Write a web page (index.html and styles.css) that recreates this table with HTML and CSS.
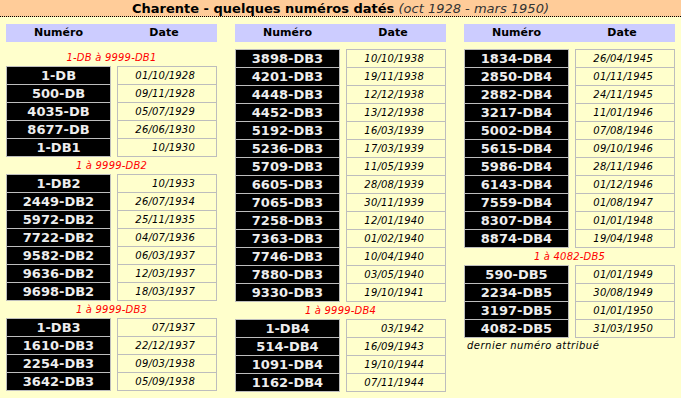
FILE: index.html
```html
<!DOCTYPE html>
<html>
<head>
  <title>Charente - quelques numéros datés</title>
  <link rel="stylesheet" href="styles.css">
</head>
<body>

  <div class="titre">
    <b>Charente - quelques numéros datés</b> <i>(oct 1928 - mars 1950)</i>
  </div>

  <div class="colonnes">

    <section class="col">
      <div class="entete"><span>Numéro</span><span>Date</span></div>
      <div class="serie">1-DB à 9999-DB1</div>
      <div class="liste">
        <div class="num">1-DB</div><div class="date">01/10/1928</div>
        <div class="num">500-DB</div><div class="date">09/11/1928</div>
        <div class="num">4035-DB</div><div class="date">05/07/1929</div>
        <div class="num">8677-DB</div><div class="date">26/06/1930</div>
        <div class="num">1-DB1</div><div class="date">10/1930</div>
      </div>
      <div class="serie">1 à 9999-DB2</div>
      <div class="liste">
        <div class="num">1-DB2</div><div class="date">10/1933</div>
        <div class="num">2449-DB2</div><div class="date">26/07/1934</div>
        <div class="num">5972-DB2</div><div class="date">25/11/1935</div>
        <div class="num">7722-DB2</div><div class="date">04/07/1936</div>
        <div class="num">9582-DB2</div><div class="date">06/03/1937</div>
        <div class="num">9636-DB2</div><div class="date">12/03/1937</div>
        <div class="num">9698-DB2</div><div class="date">18/03/1937</div>
      </div>
      <div class="serie">1 à 9999-DB3</div>
      <div class="liste">
        <div class="num">1-DB3</div><div class="date">07/1937</div>
        <div class="num">1610-DB3</div><div class="date">22/12/1937</div>
        <div class="num">2254-DB3</div><div class="date">09/03/1938</div>
        <div class="num">3642-DB3</div><div class="date">05/09/1938</div>
      </div>
    </section>

    <section class="col">
      <div class="entete"><span>Numéro</span><span>Date</span></div>
      <div class="liste">
        <div class="num">3898-DB3</div><div class="date">10/10/1938</div>
        <div class="num">4201-DB3</div><div class="date">19/11/1938</div>
        <div class="num">4448-DB3</div><div class="date">12/12/1938</div>
        <div class="num">4452-DB3</div><div class="date">13/12/1938</div>
        <div class="num">5192-DB3</div><div class="date">16/03/1939</div>
        <div class="num">5236-DB3</div><div class="date">17/03/1939</div>
        <div class="num">5709-DB3</div><div class="date">11/05/1939</div>
        <div class="num">6605-DB3</div><div class="date">28/08/1939</div>
        <div class="num">7065-DB3</div><div class="date">30/11/1939</div>
        <div class="num">7258-DB3</div><div class="date">12/01/1940</div>
        <div class="num">7363-DB3</div><div class="date">01/02/1940</div>
        <div class="num">7746-DB3</div><div class="date">10/04/1940</div>
        <div class="num">7880-DB3</div><div class="date">03/05/1940</div>
        <div class="num">9330-DB3</div><div class="date">19/10/1941</div>
      </div>
      <div class="serie">1 à 9999-DB4</div>
      <div class="liste">
        <div class="num">1-DB4</div><div class="date">03/1942</div>
        <div class="num">514-DB4</div><div class="date">16/09/1943</div>
        <div class="num">1091-DB4</div><div class="date">19/10/1944</div>
        <div class="num">1162-DB4</div><div class="date">07/11/1944</div>
      </div>
    </section>

    <section class="col">
      <div class="entete"><span>Numéro</span><span>Date</span></div>
      <div class="liste">
        <div class="num">1834-DB4</div><div class="date">26/04/1945</div>
        <div class="num">2850-DB4</div><div class="date">01/11/1945</div>
        <div class="num">2882-DB4</div><div class="date">24/11/1945</div>
        <div class="num">3217-DB4</div><div class="date">11/01/1946</div>
        <div class="num">5002-DB4</div><div class="date">07/08/1946</div>
        <div class="num">5615-DB4</div><div class="date">09/10/1946</div>
        <div class="num">5986-DB4</div><div class="date">28/11/1946</div>
        <div class="num">6143-DB4</div><div class="date">01/12/1946</div>
        <div class="num">7559-DB4</div><div class="date">01/08/1947</div>
        <div class="num">8307-DB4</div><div class="date">01/01/1948</div>
        <div class="num">8874-DB4</div><div class="date">19/04/1948</div>
      </div>
      <div class="serie">1 à 4082-DB5</div>
      <div class="liste">
        <div class="num">590-DB5</div><div class="date">01/01/1949</div>
        <div class="num">2234-DB5</div><div class="date">30/08/1949</div>
        <div class="num">3197-DB5</div><div class="date">01/01/1950</div>
        <div class="num">4082-DB5</div><div class="date">31/03/1950</div>
      </div>
      <div class="note">dernier numéro attribué</div>
    </section>

  </div>

</body>
</html>
```

FILE: styles.css
```css
body{
    margin: 0;
    background: #FFFFCC;
    font-family: "DejaVu Sans", Verdana, sans-serif;
}

.titre{
    height: 16px;
    line-height: 17px;
    background: #FFCC99;
    border-bottom: 1px dotted #000;
    text-align: center;
    font-size: 13px;
    color: #000;
}

.titre i{
    color: #333;
}

.colonnes{
    display: grid;
    grid-template-columns: repeat(3, 211px);
    column-gap: 18px;
    padding: 7px 6px 0;
}

.entete{
    display: grid;
    grid-template-columns: 105px 106px;
    height: 18px;
    line-height: 18px;
    background: #CCCCFF;
    font-size: 11px;
    font-weight: bold;
    text-align: center;
    margin-bottom: 7px;
}

.serie{
    height: 17px;
    line-height: 17px;
    text-align: center;
    color: #FF0000;
    font-size: 10px;
    font-style: italic;
    letter-spacing: 0.2px;
}

.liste{
    display: grid;
    grid-template-columns: 105px 100px;
    column-gap: 6px;
    padding-bottom: 1px;
}

.liste div{
    height: 17px;
    line-height: 17px;
    border: 1px solid #BDBDBD;
    margin-bottom: -1px;
}

.num{
    background: #000;
    color: #EEE;
    font-size: 13px;
    font-weight: bold;
    text-align: center;
}

.date{
    font-size: 10px;
    font-style: italic;
    text-align: right;
    padding-right: 21px;
    letter-spacing: 0.2px;
}

.note{
    font-size: 10px;
    font-style: italic;
    padding: 2px 3px;
    letter-spacing: 0.5px;
}
```
